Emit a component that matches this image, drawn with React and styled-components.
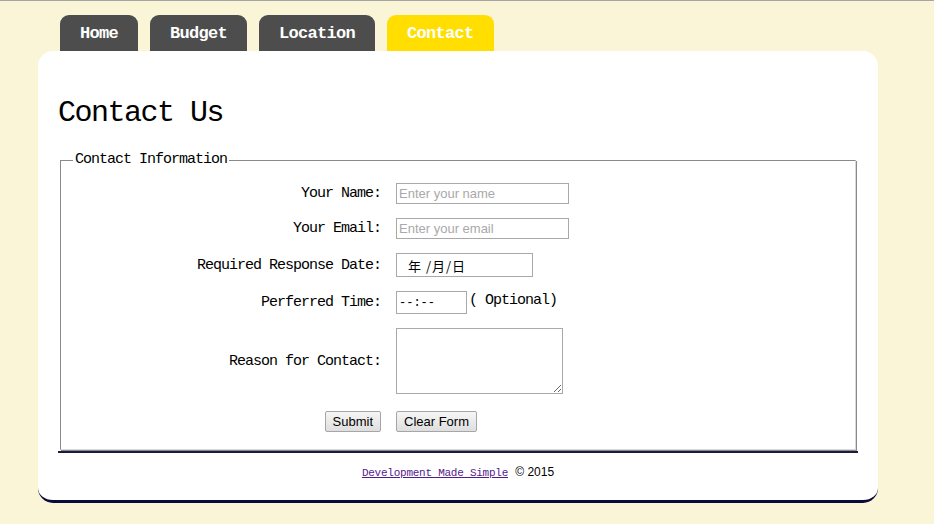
import React from "react";
import styled, { createGlobalStyle } from "styled-components";

const GlobalStyle = createGlobalStyle`
  html, body {
    margin: 0;
    padding: 0;
    background: #faf5d7;
  }
  body {
    border-top: 1px solid #a5a5a5;
    font-family: "Liberation Mono", "Noto Sans CJK SC", monospace;
  }
`;

const Page = styled.div`
  width: 840px;
  margin-left: 38px;
  padding-top: 14px;
`;

const Tabs = styled.nav`
  display: flex;
  gap: 12px;
  padding-left: 22px;
`;

const Tab = styled.a`
  display: flex;
  align-items: center;
  height: 36px;
  padding: 0 20px;
  border-radius: 9px 9px 0 0;
  background: ${(p) => (p.active ? "#ffde00" : "#4d4d4d")};
  color: #fff;
  font-weight: bold;
  font-size: 17px;
  letter-spacing: -0.7px;
  text-decoration: none;
`;

const Card = styled.main`
  background: #fff;
  border-radius: 15px;
  border-bottom: 3px solid #0a0a3a;
  padding: 0 20px 20px;
`;

const Title = styled.h1`
  margin: 0;
  padding: 44px 0 22px;
  font-size: 30px;
  font-weight: normal;
  letter-spacing: -1.5px;
  line-height: 36px;
`;

const Fieldset = styled.fieldset`
  margin: 0 2px;
  padding: 16px 12px 17px;
  border-style: solid;
  border-width: 1px;
  border-color: #8a8a8a #d9d9d9 #d9d9d9 #8a8a8a;
  box-shadow: inset 1px 1px 0 #fff, 1px 1px 0 #8a8a8a;
`;

const Legend = styled.legend`
  padding: 0 2px;
  font-size: 15px;
  letter-spacing: -1px;
  line-height: 14px;
`;

const Grid = styled.div`
  display: grid;
  grid-template-columns: 308px 1fr;
  column-gap: 15px;
  row-gap: 14px;
  align-items: center;
`;

const Label = styled.label`
  text-align: right;
  font-size: 15px;
  letter-spacing: -1px;
  color: #000;
`;

const Field = styled.div`
  display: flex;
  align-items: flex-start;
  font-size: 15px;
  letter-spacing: -1px;
`;

const TextInput = styled.input`
  box-sizing: border-box;
  width: ${(p) => p.w}px;
  height: ${(p) => p.h || 21}px;
  border: 1px solid #a9a9a9;
  padding: 0 2px;
  font-family: "Liberation Sans", Arial, sans-serif;
  font-size: 13px;
  letter-spacing: 0;
  color: #000;
  outline: none;
  &::placeholder {
    color: #a9a9a9;
  }
`;

const CjkInput = styled(TextInput)`
  font-family: "Noto Sans CJK SC", "Liberation Mono", sans-serif;
  padding-left: 11px;
  letter-spacing: 1px;
`;

const TimeInput = styled(TextInput)`
  font-family: "Liberation Mono", monospace;
  font-size: 12px;
  letter-spacing: 0;
`;

const Area = styled.textarea`
  box-sizing: border-box;
  width: 167px;
  height: 66px;
  border: 1px solid #a9a9a9;
  margin: 0;
`;

const Note = styled.span`
  margin-left: 2px;
  line-height: 20px;
`;

const Button = styled.button`
  box-sizing: border-box;
  height: 21px;
  padding: 0 7px;
  border: 1px solid #a6a6a6;
  border-radius: 2px;
  background: linear-gradient(#f6f6f6, #dedede);
  font-family: "Liberation Sans", Arial, sans-serif;
  font-size: 13px;
  color: #000;
`;

const ButtonCell = styled.div`
  display: flex;
  justify-content: ${(p) => (p.right ? "flex-end" : "flex-start")};
  margin-top: 3px;
`;

const Rule = styled.hr`
  margin: 1px 0 0;
  border: none;
  border-top: 2px solid #1b1b3f;
`;

const Footer = styled.footer`
  padding-top: 12px;
  text-align: center;
  font-size: 12px;
`;

const FootLink = styled.a`
  font-family: "Liberation Mono", monospace;
  font-size: 11px;
  letter-spacing: -0.25px;
  color: #551a8b;
`;

const Copy = styled.span`
  font-family: "Liberation Sans", Arial, sans-serif;
  font-size: 12px;
`;

export default function App() {
  return (
    <>
      <GlobalStyle />
      <Page>
        <Tabs>
          <Tab href="#">Home</Tab>
          <Tab href="#">Budget</Tab>
          <Tab href="#">Location</Tab>
          <Tab href="#" active>Contact</Tab>
        </Tabs>
        <Card>
          <Title>Contact Us</Title>
          <form onSubmit={(e) => e.preventDefault()}>
            <Fieldset>
              <Legend>Contact Information</Legend>
              <Grid>
                <Label>Your Name:</Label>
                <Field>
                  <TextInput w={173} placeholder="Enter your name" />
                </Field>
                <Label>Your Email:</Label>
                <Field>
                  <TextInput w={173} placeholder="Enter your email" />
                </Field>
                <Label>Required Response Date:</Label>
                <Field>
                  <CjkInput w={137} h={24} readOnly value="年 /月/日" />
                </Field>
                <Label>Perferred Time:</Label>
                <Field>
                  <TimeInput w={71} h={23} readOnly value="--:--" />
                  <Note>( Optional)</Note>
                </Field>
                <Label>Reason for Contact:</Label>
                <Field>
                  <Area />
                </Field>
                <ButtonCell right>
                  <Button type="submit">Submit</Button>
                </ButtonCell>
                <ButtonCell>
                  <Button type="reset">Clear Form</Button>
                </ButtonCell>
              </Grid>
            </Fieldset>
          </form>
          <Rule />
          <Footer>
            <FootLink href="#">Development Made Simple</FootLink> <Copy>© 2015</Copy>
          </Footer>
        </Card>
      </Page>
    </>
  );
}
